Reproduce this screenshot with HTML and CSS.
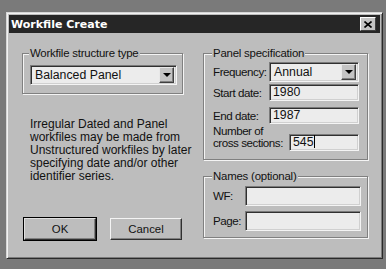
FILE: index.html
```html
<!DOCTYPE html>
<html lang="en">
<head>
  <meta charset="UTF-8" />
  <title>Workfile Create</title>
  <link rel="stylesheet" href="styles.css">
</head>
<body>
  <div class="dialog">
    <div class="titlebar">
      <span class="title">Workfile Create</span>
      <span class="close-btn">
        <svg width="8" height="7" viewBox="0 0 8 7"><path d="M0.5 0.5 L7.5 6.5 M7.5 0.5 L0.5 6.5" stroke="#000" stroke-width="1.6" fill="none"/></svg>
      </span>
    </div>

    <div class="content">
      <div class="col-left">
        <fieldset class="group">
          <legend>Workfile structure type</legend>
          <div class="group-body structure-body">
            <div class="combo">
              <span class="combo-text">Balanced Panel</span>
              <span class="combo-btn"><span class="arrow"></span></span>
            </div>
          </div>
        </fieldset>

        <p class="note">
          Irregular Dated and Panel<br>
          workfiles may be made from<br>
          Unstructured workfiles by later<br>
          specifying date and/or other<br>
          identifier series.
        </p>

        <div class="buttons">
          <button class="btn btn-default">OK</button>
          <button class="btn">Cancel</button>
        </div>
      </div>

      <div class="col-right">
        <fieldset class="group">
          <legend>Panel specification</legend>
          <div class="group-body spec-body">
            <div class="row">
              <label class="lbl">Frequency:</label>
              <div class="combo">
                <span class="combo-text">Annual</span>
                <span class="combo-btn"><span class="arrow"></span></span>
              </div>
            </div>
            <div class="row row-start">
              <label class="lbl">Start date:</label>
              <div class="field">1980</div>
            </div>
            <div class="row row-end">
              <label class="lbl">End date:</label>
              <div class="field">1987</div>
            </div>
            <div class="row row-sections">
              <label class="lbl lbl-two">Number of<br>cross sections:</label>
              <div class="field">545<span class="caret"></span></div>
            </div>
          </div>
        </fieldset>

        <fieldset class="group names">
          <legend>Names (optional)</legend>
          <div class="group-body names-body">
            <div class="row">
              <label class="lbl lbl-short">WF:</label>
              <div class="field field-tall"></div>
            </div>
            <div class="row">
              <label class="lbl lbl-short">Page:</label>
              <div class="field field-tall"></div>
            </div>
          </div>
        </fieldset>
      </div>
    </div>
  </div>
</body>
</html>
```

FILE: styles.css
```css
body {
  margin: 0;
  padding: 12px 0 0 6px;
  background: #7a7a7a;
  font-family: 'Liberation Sans', Arial, sans-serif;
  font-size: 11px;
  letter-spacing: -0.2px;
  color: #111;
}
.dialog {
  width: 377px;
  height: 247px;
  box-sizing: border-box;
  background: #bdbdbd;
  border-top: 1px solid #d6d6d6;
  border-left: 1px solid #d6d6d6;
  border-right: 1px solid #2a2a2a;
  border-bottom: 1px solid #2a2a2a;
  box-shadow: inset 1px 1px 0 #f2f2f2, inset -1px -1px 0 #7c7c7c;
  padding: 2px 2px 0 2px;
}
.titlebar {
  height: 18px;
  background: #262626;
  display: flex;
  align-items: center;
  justify-content: space-between;
  padding: 0 4px 0 2px;
}
.title {
  color: #fff;
  font-family: 'DejaVu Sans', Verdana, sans-serif;
  font-weight: bold;
  font-size: 11px;
  letter-spacing: 0;
}
.close-btn {
  width: 16px;
  height: 14px;
  box-sizing: border-box;
  background: #c4c4c4;
  border-top: 1px solid #fff;
  border-left: 1px solid #fff;
  border-right: 1px solid #404040;
  border-bottom: 1px solid #404040;
  display: flex;
  align-items: center;
  justify-content: center;
}
.content {
  display: grid;
  grid-template-columns: 161px 165px;
  column-gap: 20px;
  padding: 13px 0 0 13px;
}
.group {
  margin: 0;
  padding: 0;
  border: 1px solid #808080;
  box-shadow: inset 1px 1px 0 #f4f4f4, 1px 1px 0 #f4f4f4;
}
.group legend {
  margin-left: 6px;
  padding: 0 1px;
  line-height: 14px;
  font-size: 11.4px;
  background: #bdbdbd;
}
.col-right .group legend {
  margin-left: 8px;
}
.structure-body {
  padding: 5px 5px 8px 7px;
}
.combo {
  height: 20px;
  box-sizing: border-box;
  background: #ececec;
  border-top: 1px solid #7a7a7a;
  border-left: 1px solid #7a7a7a;
  border-right: 1px solid #f4f4f4;
  border-bottom: 1px solid #f4f4f4;
  box-shadow: inset 1px 1px 0 #303030, inset -1px -1px 0 #d0d0d0;
  display: flex;
  align-items: center;
  justify-content: space-between;
  padding: 0 2px 0 4px;
  flex: 1;
  font-size: 12.3px;
  letter-spacing: 0;
}
.combo-btn {
  width: 15px;
  height: 16px;
  box-sizing: border-box;
  background: #c4c4c4;
  border-top: 1px solid #e8e8e8;
  border-left: 1px solid #e8e8e8;
  border-right: 1px solid #404040;
  border-bottom: 1px solid #404040;
  box-shadow: inset -1px -1px 0 #808080;
  display: flex;
  align-items: center;
  justify-content: center;
}
.arrow {
  width: 0;
  height: 0;
  border-left: 4px solid transparent;
  border-right: 4px solid transparent;
  border-top: 4px solid #000;
}
.note {
  margin: 24px 0 0 8px;
  font-size: 12px;
  letter-spacing: 0;
  line-height: 13px;
  white-space: nowrap;
}
.buttons {
  display: flex;
  gap: 14px;
  margin: 35px 0 0 2px;
}
.btn {
  width: 72px;
  height: 22px;
  padding: 0;
  font-family: inherit;
  font-size: 11.4px;
  color: #111;
  background: #bdbdbd;
  border-top: 1px solid #f4f4f4;
  border-left: 1px solid #f4f4f4;
  border-right: 1px solid #303030;
  border-bottom: 1px solid #303030;
  box-shadow: inset -1px -1px 0 #808080;
}
.btn-default {
  outline: 1px solid #000;
  border-top-color: #e0e0e0;
  border-left-color: #e0e0e0;
}
.spec-body {
  padding: 2px 8px 8px 9px;
}
.row {
  display: flex;
  align-items: center;
}
.row-start {
  margin-top: 2px;
}
.row-end {
  margin-top: 6px;
}
.row-sections {
  margin-top: 1px;
  align-items: flex-end;
}
.lbl {
  width: 56px;
  flex: none;
  font-size: 11.6px;
  letter-spacing: -0.45px;
  line-height: 12px;
  white-space: nowrap;
}
.lbl-two {
  width: 76px;
  margin-bottom: 2px;
}
.lbl-short {
  width: 32px;
}
.field {
  flex: 1;
  height: 17px;
  box-sizing: border-box;
  background: #ececec;
  border-top: 1px solid #7a7a7a;
  border-left: 1px solid #7a7a7a;
  border-right: 1px solid #f4f4f4;
  border-bottom: 1px solid #f4f4f4;
  box-shadow: inset 1px 1px 0 #303030, inset -1px -1px 0 #d0d0d0;
  padding: 0 3px;
  font-size: 12.3px;
  letter-spacing: 0;
  line-height: 15px;
}
.caret {
  display: inline-block;
  width: 1px;
  height: 13px;
  background: #000;
  vertical-align: -2px;
}
.names {
  margin-top: 9px;
}
.names-body {
  padding: 3px 6px 6px 9px;
  display: flex;
  flex-direction: column;
  gap: 5px;
}
.field-tall {
  height: 20px;
}
```
